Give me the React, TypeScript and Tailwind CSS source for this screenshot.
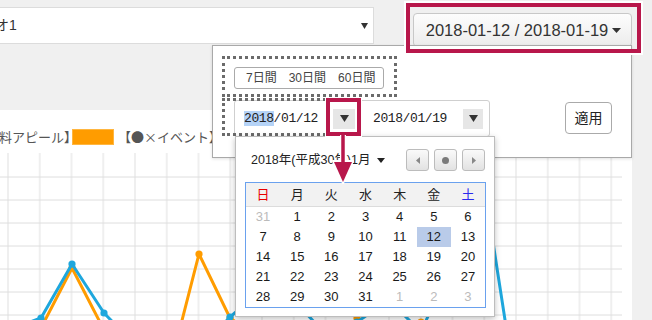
import React from "react";

const SANS = "font-['Liberation_Sans','Noto_Sans_CJK_JP',sans-serif]";

type P = [number, number];

function Series({ pts, color }: { pts: P[]; color: string }) {
  const off = 153;
  const d = pts.map(([x, y]) => `${x},${y - off}`).join(" ");
  return (
    <g>
      <polyline points={d} fill="none" stroke={color} strokeWidth={3} strokeLinejoin="round" />
      {pts.map(([x, y], i) => (
        <circle key={i} cx={x} cy={y - off} r={3.6} fill={color} />
      ))}
    </g>
  );
}

function Chart() {
  const vx = Array.from({ length: 20 }, (_, k) => 8 + 31.75 * k);
  const hy = [24, 47, 70, 93, 116, 139, 162];
  const blueA: P[] = [[8, 330], [41, 318], [72, 264], [104, 313], [135, 345]];
  const blueB: P[] = [[199, 350], [230, 317], [262, 290], [294, 300], [326, 335], [357, 322], [389, 300], [421, 332], [453, 260], [484, 184], [516, 391]];
  const orA: P[] = [[8, 392], [40, 330], [72, 268], [104, 330], [135, 380]];
  const orB: P[] = [[167, 379], [199, 254], [230, 318], [262, 340], [294, 330], [326, 360], [357, 318], [389, 340], [421, 322], [453, 335], [484, 352]];
  return (
    <svg width={632} height={200} className="block">
      {vx.map((x, i) => (
        <line key={"v" + i} x1={x} x2={x} y1={0} y2={200} stroke="#efefef" strokeWidth={2} />
      ))}
      {hy.map((y, i) => (
        <line key={"h" + i} x1={0} x2={622} y1={y} y2={y} stroke="#dedede" strokeWidth={1} />
      ))}
      <Series pts={orA} color="#ff9c00" />
      <Series pts={blueA} color="#1ea7dd" />
      <Series pts={orB} color="#ff9c00" />
      <Series pts={blueB} color="#1ea7dd" />
    </svg>
  );
}

function DownTri({ className }: { className?: string }) {
  return (
    <svg width="9" height="7" viewBox="0 0 9 7" className={className}>
      <path d="M0 0 L9 0 L4.5 7 Z" fill="#333" />
    </svg>
  );
}

export default function App() {
  const rows = [
    [31, 1, 2, 3, 4, 5, 6],
    [7, 8, 9, 10, 11, 12, 13],
    [14, 15, 16, 17, 18, 19, 20],
    [21, 22, 23, 24, 25, 26, 27],
    [28, 29, 30, 31, 1, 2, 3],
  ];
  const other = (r: number, c: number) => (r === 0 && c === 0) || (r === 4 && c >= 4);
  const heads: [string, string][] = [
    ["日", "text-[#e80000]"],
    ["月", "text-[#222]"],
    ["火", "text-[#222]"],
    ["水", "text-[#222]"],
    ["木", "text-[#222]"],
    ["金", "text-[#222]"],
    ["土", "text-[#2a2aee]"],
  ];

  return (
    <div className={`relative w-[652px] h-[320px] overflow-hidden bg-[#f0f0f0] ${SANS}`}>
      {/* top bar */}
      <div className="flex items-start h-[110px]">
        <div className="mt-[7px] w-[374px] h-[37px] bg-white border border-[#dcdcdc] border-l-0 flex items-center justify-between pr-[5px]">
          <span className="-ml-[5px] text-[14px] text-[#333]">オ1</span>
          <svg width="7" height="6" viewBox="0 0 7 6">
            <path d="M0 0 L7 0 L3.5 6 Z" fill="#333" />
          </svg>
        </div>
        <button className="ml-[39px] mt-[13px] w-[219px] h-[34px] rounded-[4px] border border-[#c8c8c8] bg-gradient-to-b from-[#fdfdfd] to-[#ececec] flex items-center justify-center pl-[2px] text-[16.5px] text-[#333]">
          <span>2018-01-12 / 2018-01-19</span>
          <svg width="9" height="5" viewBox="0 0 9 5" className="ml-[4px]">
            <path d="M0 0 L9 0 L4.5 5 Z" fill="#333" />
          </svg>
        </button>
      </div>

      {/* chart card */}
      <div className="w-[632px] bg-white">
        <div className="h-[43px] pt-[10px] flex items-center text-[13px] text-[#555] whitespace-nowrap font-['Noto_Sans_CJK_JP',sans-serif]">
          <span className="-ml-[1px]">料アピール】</span>
          <span className="-ml-[5px] w-[42px] h-[16px] bg-[#ff9c00] border border-[#ffb640]" />
          <span className="ml-[4px]">【●×イベント】</span>
        </div>
        <Chart />
      </div>

      {/* popup */}
      <div className="absolute left-[212px] top-[45px] w-[420px] h-[113px] bg-white border border-[#a9a9a9] shadow-[0_1px_3px_rgba(0,0,0,0.12)] pl-[21px] pt-[21px] flex flex-col items-start">
        <div className="h-[22px] w-[150px] rounded-[3px] border border-[#aaa] flex items-center text-[12px] text-[#444] pl-[11px] gap-[12px]">
          <span>7日間</span>
          <span>30日間</span>
          <span>60日間</span>
        </div>
        <div className="mt-[11px] flex items-start w-full">
          <div className="w-[256px] h-[37px] rounded-[3px] border border-[#cfcfcf] flex items-center pl-[9px] font-['Liberation_Mono',monospace] text-[13px] tracking-[-0.4px] text-[#222]">
            <span className="w-[89px] whitespace-nowrap">
              <span className="bg-[#b5d3f7]">2018</span>/01/12
            </span>
            <span className="w-[22px] h-[20px] bg-[#e6e6e6] flex items-center justify-center">
              <DownTri />
            </span>
            <span className="ml-[18px] w-[90px] whitespace-nowrap">2018/01/19</span>
            <span className="w-[20px] h-[20px] bg-[#e6e6e6] flex items-center justify-center">
              <DownTri />
            </span>
          </div>
          <button className="ml-[75px] mt-[2px] w-[47px] h-[32px] rounded-[4px] border border-[#aaa] bg-white text-[14px] text-[#222] flex items-center justify-center">
            適用
          </button>
        </div>
      </div>

      {/* dotted focus rectangles */}
      <div className="absolute left-[222px] top-[56px] w-[175px] h-[41px] border-[3px] border-dotted border-[#6b6b6b]" />
      <div className="absolute left-[222px] top-[98px] w-[122px] h-[38px] border-[3px] border-dotted border-[#6b6b6b] border-r-0" />

      {/* calendar dropdown */}
      <div className="absolute left-[235px] top-[136px] w-[260px] h-[181px] bg-white border border-[#bdbdbd] shadow-[0_2px_6px_rgba(0,0,0,0.25)] px-[9px] pt-[12px]">
        <div className="flex items-center justify-between h-[22px]">
          <div className="flex items-center pl-[6px] text-[12.5px] text-[#222]">
            <span>2018年(平成30年)1月</span>
            <svg width="8" height="5" viewBox="0 0 8 5" className="ml-[6px]">
              <path d="M0 0 L8 0 L4 5 Z" fill="#222" />
            </svg>
          </div>
          <div className="flex gap-[5px]">
            <span className="w-[23px] h-[22px] rounded-[3px] border border-[#bcbcbc] bg-gradient-to-b from-[#fafafa] to-[#e2e2e2] flex items-center justify-center">
              <svg width="4" height="7" viewBox="0 0 4 7"><path d="M4 0 L4 7 L0 3.5 Z" fill="#888" /></svg>
            </span>
            <span className="w-[23px] h-[22px] rounded-[3px] border border-[#bcbcbc] bg-gradient-to-b from-[#fafafa] to-[#e2e2e2] flex items-center justify-center">
              <span className="w-[7px] h-[7px] rounded-full bg-[#7a7a7a]" />
            </span>
            <span className="w-[23px] h-[22px] rounded-[3px] border border-[#bcbcbc] bg-gradient-to-b from-[#fafafa] to-[#e2e2e2] flex items-center justify-center">
              <svg width="4" height="7" viewBox="0 0 4 7"><path d="M0 0 L0 7 L4 3.5 Z" fill="#888" /></svg>
            </span>
          </div>
        </div>
        <div className="mt-[11px] w-[241px] border border-[#6aa1ee]">
          <div className="grid grid-cols-7 h-[24px] bg-[#f2f2f2] border-b border-[#dcdcdc] text-[13px]">
            {heads.map(([t, c]) => (
              <span key={t} className={`flex items-center justify-center ${c}`}>{t}</span>
            ))}
          </div>
          <div className="grid grid-cols-7 text-[13px] font-['Liberation_Sans',sans-serif]">
            {rows.map((r, ri) =>
              r.map((d, ci) => (
                <span
                  key={ri + "-" + ci}
                  className={`h-[20px] flex items-center justify-center ${
                    other(ri, ci) ? "text-[#bbbbbb]" : "text-[#1a1a1a]"
                  } ${ri === 1 && ci === 5 ? "bg-[#b9cbe9]" : ""}`}
                >
                  {d}
                </span>
              ))
            )}
          </div>
        </div>
      </div>

      {/* red annotations */}
      <div className="absolute left-[406px] top-[3px] w-[235px] h-[50px] border-[4px] border-[#b8174b] shadow-[0_0_0_2px_#ffffff]" />
      <div className="absolute left-[326px] top-[98px] w-[35px] h-[38px] border-[4px] border-[#b8174b] shadow-[0_0_0_1px_#ffffff]" />
      <svg className="absolute left-[331px] top-[135px]" width="24" height="52" viewBox="0 0 24 52">
        <path d="M12 0 L12 30" stroke="#ffffff" strokeWidth="6" />
        <path d="M2 26 L22 26 L12 48 Z" fill="#ffffff" stroke="#ffffff" strokeWidth="2" strokeLinejoin="round" />
        <path d="M12 0 L12 30" stroke="#b8174b" strokeWidth="3.5" />
        <path d="M3 27 L21 27 L12 47 Z" fill="#b8174b" />
      </svg>
    </div>
  );
}
